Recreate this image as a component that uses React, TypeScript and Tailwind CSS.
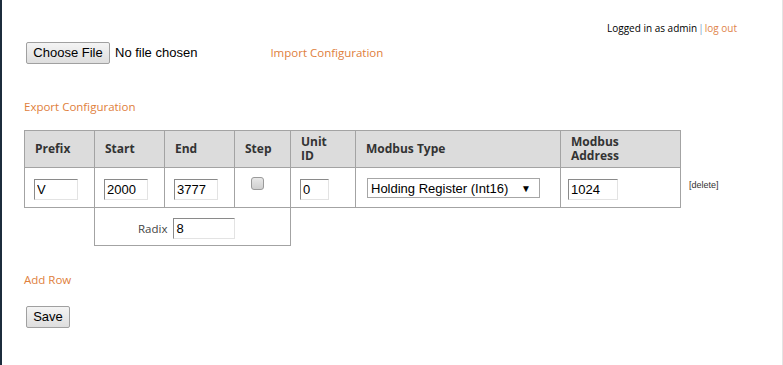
import React from "react";

const inputCls =
  "h-[21px] border border-t-[#8a8a8a] border-l-[#8a8a8a] border-b-[#e3e3e3] border-r-[#e3e3e3] bg-white px-[2px] text-[13px] text-black outline-none font-['Liberation_Sans',Arial,sans-serif]";

function Th({ children, w }: { children: React.ReactNode; w: string }) {
  return (
    <th
      className={`${w} border border-[#a3a3a3] bg-[#dcdcdc] px-[10px] text-left align-middle text-[12px] font-bold leading-[14px] text-[#333]`}
    >
      {children}
    </th>
  );
}

function Td({ children, cls = "" }: { children?: React.ReactNode; cls?: string }) {
  return <td className={`border border-[#a3a3a3] px-[9px] align-middle ${cls}`}>{children}</td>;
}

export default function App() {
  return (
    <div className="flex min-h-[365px] w-[783px] bg-white font-['Open_Sans',sans-serif] text-[#222]">
      <div className="w-[2px] shrink-0 bg-[#1c2c3c]" />
      <div className="relative flex-1 pl-[22px] pr-[45px]">
        <div className="flex justify-end pt-[21px] text-[10px] leading-[14px]">
          <span className="text-black">Logged in as admin</span>
          <span className="mx-[1px] text-[#7aa0c8]">|</span>
          <span className="text-[#e0844a]">log out</span>
        </div>
        <div className="mt-[7px] flex items-center">
          <button className="ml-[2px] h-[22px] w-[84px] rounded-[2px] border border-[#a0a0a0] bg-gradient-to-b from-[#f4f4f4] to-[#dedede] text-[13px] text-black font-['Liberation_Sans',Arial,sans-serif]">
            Choose File
          </button>
          <span className="ml-[5px] text-[13px] text-black font-['Liberation_Sans',Arial,sans-serif]">
            No file chosen
          </span>
          <span className="ml-[73px] text-[11.5px] text-[#e0803c]">Import Configuration</span>
        </div>
        <div className="mt-[34px] text-[11.5px] leading-[17px] text-[#e0803c]">Export Configuration</div>
        <table className="mt-[15px] border-collapse">
          <thead>
            <tr className="h-[37px]">
              <Th w="w-[70px]">Prefix</Th>
              <Th w="w-[70px]">Start</Th>
              <Th w="w-[70px]">End</Th>
              <Th w="w-[56px]">Step</Th>
              <Th w="w-[65px]">
                Unit
                <br />
                ID
              </Th>
              <Th w="w-[205px]">Modbus Type</Th>
              <Th w="w-[120px]">
                Modbus
                <br />
                Address
              </Th>
            </tr>
          </thead>
          <tbody>
            <tr className="h-[40px]">
              <Td>
                <input className={`${inputCls} w-[44px]`} defaultValue="V" />
              </Td>
              <Td>
                <input className={`${inputCls} w-[44px]`} defaultValue="2000" />
              </Td>
              <Td>
                <input className={`${inputCls} w-[44px]`} defaultValue="3777" />
              </Td>
              <Td cls="pl-[16px] text-left">
                <span className="mb-[8px] block h-[13px] w-[13px] rounded-[3px] border border-[#9a9a9a] bg-gradient-to-b from-[#e8e8e8] to-[#cfcfcf]" />
              </Td>
              <Td>
                <input className={`${inputCls} w-[29px]`} defaultValue="0" />
              </Td>
              <Td cls="pl-[11px]">
                <div className="relative h-[20px] w-[173px] border border-[#a6a6a6] bg-white">
                  <span className="absolute left-[3px] top-[1px] text-[13px] leading-[17px] text-black font-['Liberation_Sans',Arial,sans-serif]">
                    Holding Register (Int16)
                  </span>
                  <span className="absolute right-[8px] top-[2px] text-[10px] leading-[14px] text-black">▼</span>
                </div>
              </Td>
              <Td cls="pl-[7px]">
                <input className={`${inputCls} w-[50px]`} defaultValue="1024" />
              </Td>
              <td className="pl-[8px] pb-[3px] align-middle text-[9px] text-[#333] font-['Liberation_Sans',Arial,sans-serif]">
                [delete]
              </td>
            </tr>
            <tr className="h-[38px]">
              <td />
              <td colSpan={3} className="border border-[#a3a3a3] pl-[43px] align-middle">
                <span className="mr-[6px] text-[11.5px] text-[#444]">Radix</span>
                <input className={`${inputCls} w-[62px]`} defaultValue="8" />
              </td>
              <td colSpan={4} />
            </tr>
          </tbody>
        </table>
        <div className="mt-[25px] text-[11.5px] leading-[17px] text-[#e0803c]">Add Row</div>
        <button className="ml-[2px] mt-[18px] h-[22px] w-[44px] rounded-[2px] border border-[#a0a0a0] bg-gradient-to-b from-[#f4f4f4] to-[#dedede] text-[13px] text-black font-['Liberation_Sans',Arial,sans-serif]">
          Save
        </button>
      </div>
      <div className="w-[1px] shrink-0 bg-[#e4e4e4]" />
    </div>
  );
}
